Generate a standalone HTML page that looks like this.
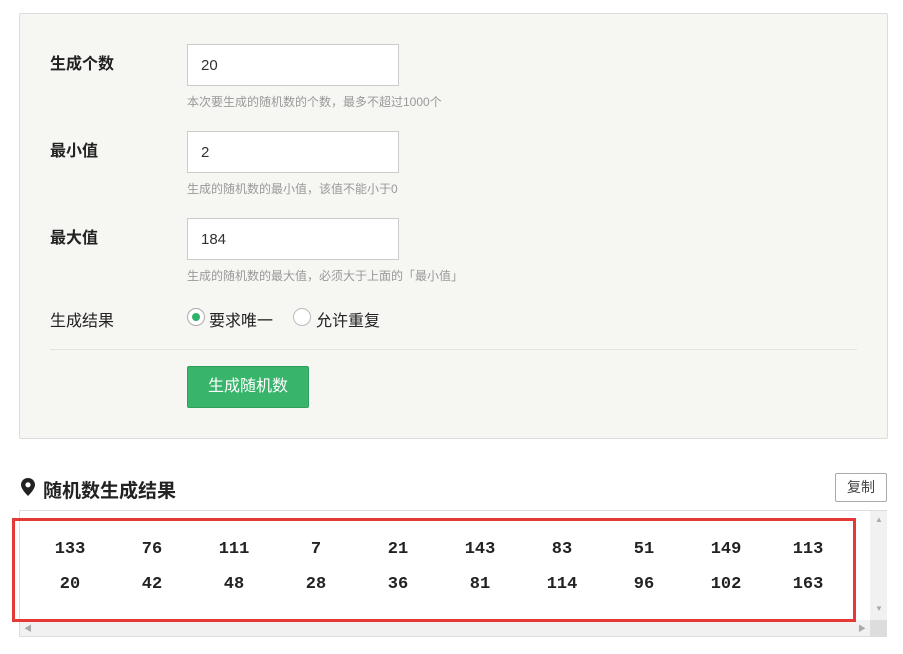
<!DOCTYPE html>
<html><head><meta charset="utf-8"><style>
body{margin:0;width:903px;height:654px;background:#fff;position:relative;font-family:"Liberation Sans","Noto Sans CJK SC",sans-serif;overflow:hidden}
.abs{position:absolute}
.panel{left:19px;top:13px;width:867px;height:424px;background:#f6f6f3;border:1px solid #ddd;border-radius:2px}
.lab{left:50px;font-size:16px;font-weight:bold;color:#222}
.inp{left:187px;width:212px;height:42px;background:#fff;border:1px solid #ccc;font-size:15px;line-height:42px;padding-left:13px;box-sizing:border-box;color:#333}
.help{left:187px;font-size:12px;color:#999}
.num{font-family:"Liberation Mono",monospace;font-weight:bold;font-size:17px;color:#222;width:60px;text-align:center}
</style></head><body>
<div class="abs panel"></div>
<div class="abs lab" style="top:50px">生成个数</div>
<div class="abs inp" style="top:44px">20</div>
<div class="abs help" style="top:93px">本次要生成的随机数的个数，最多不超过1000个</div>
<div class="abs lab" style="top:137px">最小值</div>
<div class="abs inp" style="top:131px">2</div>
<div class="abs help" style="top:180px">生成的随机数的最小值，该值不能小于0</div>
<div class="abs lab" style="top:224px">最大值</div>
<div class="abs inp" style="top:218px">184</div>
<div class="abs help" style="top:267px">生成的随机数的最大值，必须大于上面的「最小值」</div>
<div class="abs" style="left:50px;top:307px;font-size:16px;color:#222">生成结果</div>
<div class="abs" style="left:187px;top:308px;width:18px;height:18px;border:1px solid #aaa;border-radius:50%;background:#fff;box-sizing:border-box"><div style="position:absolute;left:4px;top:4px;width:8px;height:8px;border-radius:50%;background:#2fb26a"></div></div>
<div class="abs" style="left:209px;top:307px;font-size:16px;color:#222">要求唯一</div>
<div class="abs" style="left:293px;top:308px;width:18px;height:18px;border:1px solid #bbb;border-radius:50%;background:#fff;box-sizing:border-box"></div>
<div class="abs" style="left:316px;top:307px;font-size:16px;color:#222">允许重复</div>
<div class="abs" style="left:50px;top:349px;width:807px;height:1px;background:#e3e3e3"></div>
<div class="abs" style="left:187px;top:366px;width:122px;height:42px;background:#38b46b;border:1px solid #2fa05c;box-sizing:border-box;border-radius:2px;color:#fff;font-size:16px;line-height:40px;text-align:center">生成随机数</div>
<svg class="abs" style="left:21px;top:478px" width="14" height="18" viewBox="0 0 14 18"><path d="M7 0C3.1 0 0 3 0 6.8 0 11.5 7 18 7 18s7-6.5 7-11.2C14 3 10.9 0 7 0z" fill="#222"/><circle cx="7" cy="6.8" r="2.6" fill="#fff"/></svg>
<div class="abs" style="left:43px;top:476px;font-size:19px;font-weight:bold;color:#222">随机数生成结果</div>
<div class="abs" style="left:835px;top:473px;width:52px;height:29px;border:1px solid #aaa;box-sizing:border-box;background:#fff;border-radius:2px;font-size:14px;color:#444;text-align:center;line-height:27px">复制</div>
<div class="abs" style="left:19px;top:510px;width:868px;height:127px;border:1px solid #ddd;box-sizing:border-box;background:#fff"></div>
<div class="abs" style="left:870px;top:511px;width:17px;height:109px;background:#f1f1f1"></div>
<div class="abs" style="left:20px;top:620px;width:850px;height:16px;background:#f1f1f1"></div>
<div class="abs" style="left:870px;top:620px;width:17px;height:16px;background:#ddd"></div>
<div class="abs" style="left:875px;top:515px;font-size:8px;color:#aaa">▲</div>
<div class="abs" style="left:875px;top:604px;font-size:8px;color:#aaa">▼</div>
<div class="abs" style="left:24px;top:623px;font-size:8px;color:#aaa">◀</div>
<div class="abs" style="left:858px;top:623px;font-size:8px;color:#aaa">▶</div>
<div class="abs" style="left:12px;top:518px;width:844px;height:104px;border:3px solid #e53935;box-sizing:border-box"></div>
<div class="abs num" style="left:40px;top:540px">133</div><div class="abs num" style="left:122px;top:540px">76</div><div class="abs num" style="left:204px;top:540px">111</div><div class="abs num" style="left:286px;top:540px">7</div><div class="abs num" style="left:368px;top:540px">21</div><div class="abs num" style="left:450px;top:540px">143</div><div class="abs num" style="left:532px;top:540px">83</div><div class="abs num" style="left:614px;top:540px">51</div><div class="abs num" style="left:696px;top:540px">149</div><div class="abs num" style="left:778px;top:540px">113</div>
<div class="abs num" style="left:40px;top:575px">20</div><div class="abs num" style="left:122px;top:575px">42</div><div class="abs num" style="left:204px;top:575px">48</div><div class="abs num" style="left:286px;top:575px">28</div><div class="abs num" style="left:368px;top:575px">36</div><div class="abs num" style="left:450px;top:575px">81</div><div class="abs num" style="left:532px;top:575px">114</div><div class="abs num" style="left:614px;top:575px">96</div><div class="abs num" style="left:696px;top:575px">102</div><div class="abs num" style="left:778px;top:575px">163</div>
</body></html>
